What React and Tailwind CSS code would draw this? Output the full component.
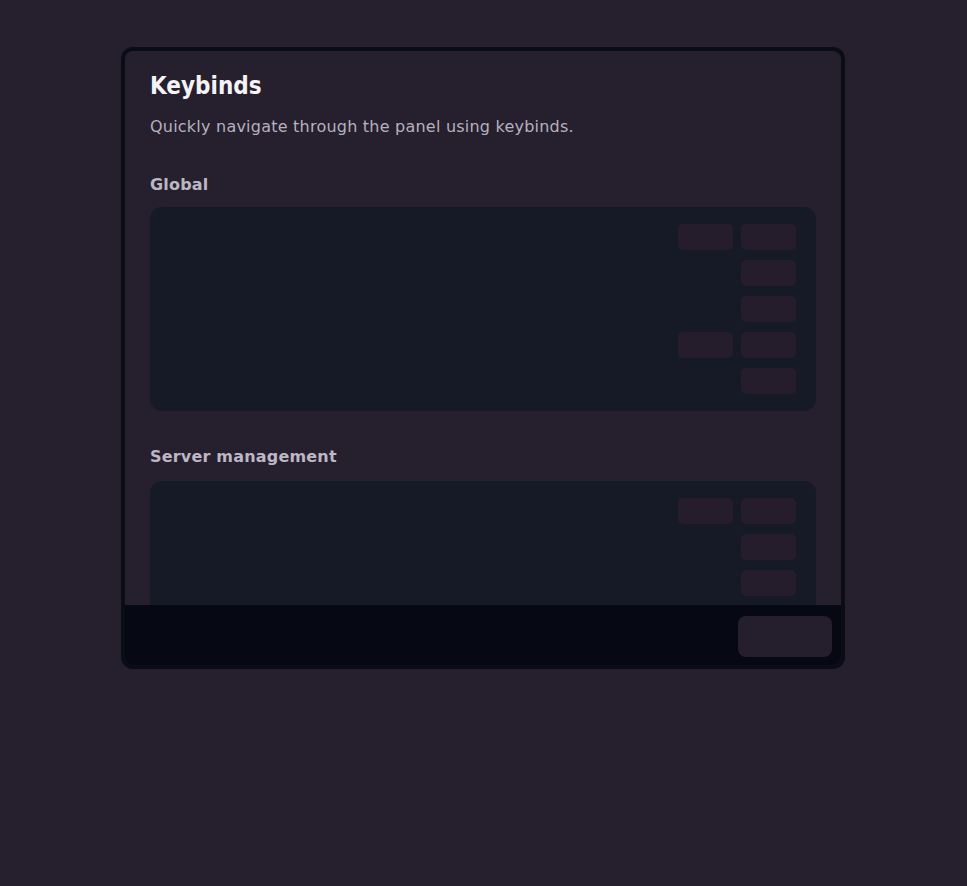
import React from 'react';

const globalRows = [2, 1, 1, 2, 1];
const serverRows = [2, 1, 1, 2];

function KeyRow({ count }) {
  return (
    <div className="flex h-[26px] items-center justify-end gap-2">
      {Array.from({ length: count }).map((_, i) => (
        <div key={i} className="h-[26px] w-[55px] rounded-[5px] bg-[#251d2c]" />
      ))}
    </div>
  );
}

function Section({ title, rows, className = '', cardGap = 'mt-[10px]' }) {
  return (
    <div className={className}>
      <h3 className="text-[16px] leading-6 font-bold tracking-[0.012em] text-[#bcb7c3]">{title}</h3>
      <div className={`${cardGap} flex flex-col gap-[10px] rounded-xl bg-[#161a27] pt-[17px] pr-5 pb-[17px]`}>
        {rows.map((n, i) => (
          <KeyRow key={i} count={n} />
        ))}
      </div>
    </div>
  );
}

export default function App() {
  return (
    <div
      className="min-h-[886px] w-full bg-[#251f2e] pt-[47px]"
      style={{ fontFamily: '"DejaVu Sans", sans-serif' }}
    >
      <div className="ml-[121px] flex h-[622px] w-[724px] flex-col overflow-hidden rounded-xl border-4 border-[#0a0c16] bg-[#251f2e]">
        {/* Content */}
        <div className="flex-1 overflow-hidden px-[25px] pt-[21px]">
          <h2 className="font-['DejaVu_Sans_Condensed','DejaVu_Sans',sans-serif] text-[24px] leading-7 font-bold text-[#f4f3f6]">
            Keybinds
          </h2>
          <p className="mt-[15px] text-[16px] leading-6 tracking-[0.014em] text-[#b6b1be]">
            Quickly navigate through the panel using keybinds.
          </p>
          <Section title="Global" rows={globalRows} className="mt-[34px]" />
          <Section title="Server management" rows={serverRows} className="mt-[34px]" cardGap="mt-[12px]" />
        </div>

        {/* Footer */}
        <div className="flex h-[60px] shrink-0 items-start justify-end bg-[#060913] pt-[11px] pr-[9px]">
          <button className="h-[41px] w-[94px] rounded-lg bg-[#251e2d]" />
        </div>
      </div>
    </div>
  );
}
